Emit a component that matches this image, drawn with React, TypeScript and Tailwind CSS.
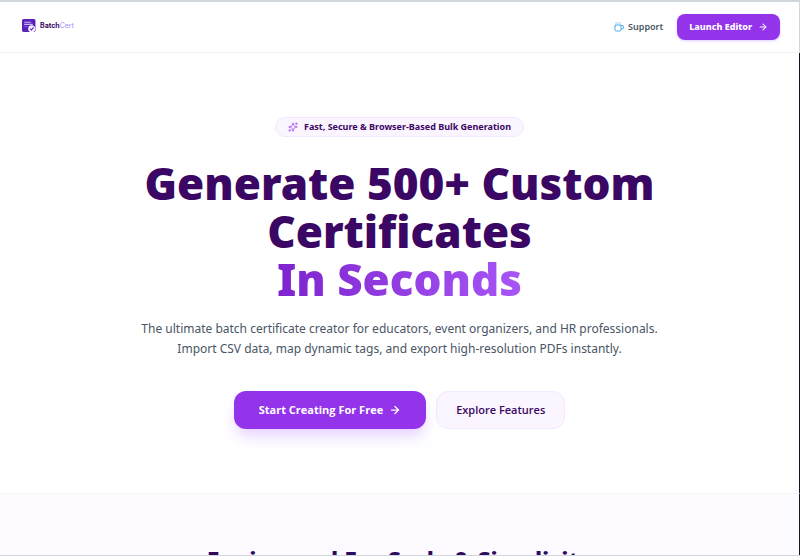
import { ArrowRight, Sparkles } from "lucide-react";

function Logo() {
  return (
    <a href="#" className="flex items-center gap-1 pb-0.5 font-['Inter',sans-serif] text-[7px] leading-3">
      <svg viewBox="0 0 26 26" className="size-[14px]" aria-hidden="true">
        <rect width="25" height="24" rx="3" fill="#5b21b6" />
        <path d="M4 6h13M4 10h16" stroke="#c4b5fd" strokeWidth="2" />
        <path d="M4 14h7" stroke="#8b5cf6" strokeWidth="1.5" />
        <circle cx="18" cy="18" r="6.5" fill="#f5f3ff" />
        <path d="m15 18 2.5 2.5 4-5" fill="none" stroke="#5b21b6" strokeWidth="2" />
      </svg>
      <span className="text-[#a78bfa]">
        <span className="font-bold text-[#3b0764]">Batch</span>Cert
      </span>
    </a>
  );
}

function CupIcon() {
  return (
    <svg viewBox="0 0 20 20" className="size-[10px]" fill="none" stroke="#4ba9ea" strokeWidth="2" aria-hidden="true">
      <path d="M2 6h12v9a3 3 0 0 1-3 3H5a3 3 0 0 1-3-3z" />
      <path d="M14 7h2a3 3 0 0 1 0 7h-2" />
      <path d="M3 2h10" strokeDasharray="2 2" />
    </svg>
  );
}

function Header() {
  return (
    <header className="flex h-[51px] shrink-0 items-center justify-between border-b border-r border-b-gray-100 border-r-gray-300 pr-[19px] pl-[22px]">
      <Logo />
      <nav className="flex items-center gap-3.5">
        <a href="#support" className="flex items-center gap-1 text-[9px] leading-4 font-semibold text-gray-600">
          <CupIcon />
          Support
        </a>
        <button className="flex h-[26px] items-center gap-1.5 rounded-lg bg-[#9333ea] px-3 text-[9px] leading-4 font-extrabold text-white shadow-sm shadow-purple-200">
          Launch Editor
          <ArrowRight className="size-[10px]" strokeWidth={2.5} />
        </button>
      </nav>
    </header>
  );
}

function Hero() {
  return (
    <section className="flex shrink-0 flex-col items-center border-r border-gray-900 px-6 py-16 text-center">
      <div className="flex h-5 items-center gap-1.5 rounded-full border border-purple-100 bg-purple-50 px-3 text-[9px] leading-4 font-bold text-[#3b0764]">
        <Sparkles className="size-[10px] text-[#a855f7]" />
        Fast, Secure & Browser-Based Bulk Generation
      </div>
      <h1 className="mt-[22px] text-[44px] leading-[48px] font-black text-[#3b0764]">
        <span className="block">Generate 500+ Custom</span>
        <span className="block">Certificates</span>
        <span className="mx-auto block w-fit bg-linear-to-r from-[#7e22ce] to-[#a855f7] bg-clip-text text-transparent">
          In Seconds
        </span>
      </h1>
      <p className="mt-4 text-xs leading-5 text-gray-600">
        The ultimate batch certificate creator for educators, event organizers, and HR professionals.
        <br />
        Import CSV data, map dynamic tags, and export high-resolution PDFs instantly.
      </p>
      <div className="mt-8 flex gap-2.5 font-['Open_Sans','Noto_Sans',sans-serif] text-[11px] leading-4">
        <button className="flex h-[38px] items-center gap-1.5 rounded-xl bg-[#9333ea] px-[25px] font-bold text-white shadow-lg shadow-purple-200">
          Start Creating For Free
          <ArrowRight className="size-3" strokeWidth={2.5} />
        </button>
        <button className="h-[38px] rounded-xl border border-purple-100 bg-purple-50 px-[19px] font-semibold text-[#3b0764]">
          Explore Features
        </button>
      </div>
    </section>
  );
}

function Features() {
  return (
    <section id="features" className="min-h-0 flex-1 overflow-hidden border-t border-r border-t-gray-100 border-r-gray-900 bg-[#fdfbff] pt-[50px] text-center">
      <h2 className="text-[23px] leading-8 font-extrabold text-[#2e0a5e]">
        Engineered For Scale & Simplicity
      </h2>
    </section>
  );
}

export default function App() {
  return (
    <div className="flex h-screen flex-col overflow-hidden border-t-2 border-b border-t-gray-300 border-b-gray-300 bg-white font-['Noto_Sans','Open_Sans',sans-serif]">
      <Header />
      <Hero />
      <Features />
    </div>
  );
}
